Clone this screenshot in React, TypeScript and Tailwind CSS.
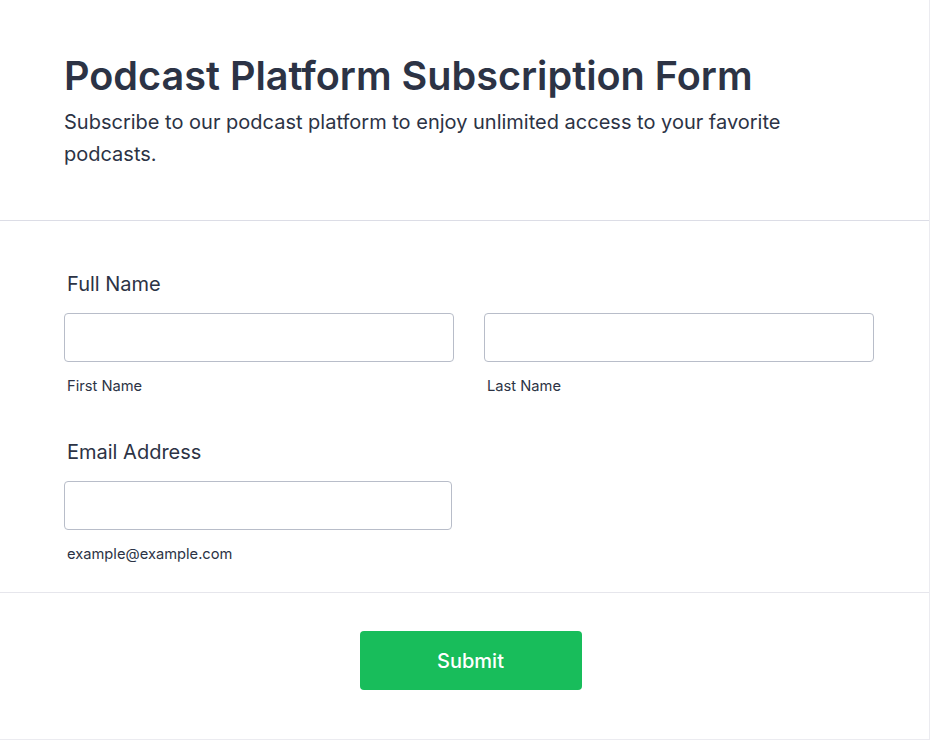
import React from 'react';

const SubLabel = ({ children }: { children: React.ReactNode }) => (
    <p className="mt-[14px] pl-[3px] text-[14.7px] leading-[20px] text-[#2c3345]">{children}</p>
);

const App = () => {
    return (
        <div className="min-h-[740px] w-full bg-white" style={{ fontFamily: 'Inter, "Noto Sans", sans-serif' }}>
            <div className="h-[740px] w-[930px] border-r border-b border-[#ebebf0] bg-white">
                <header className="border-b border-[#dcdde6] px-16 pt-[52px] pb-[50px]">
                    <h1 className="text-[39.6px] leading-[48px] font-semibold text-[#2c3345]">Podcast Platform Subscription Form</h1>
                    <p className="mt-[6px] max-w-[740px] text-[20px] leading-[32px] text-[#2c3345]">
                        Subscribe to our podcast platform to enjoy unlimited access to your favorite podcasts.
                    </p>
                </header>

                <form className="border-b border-[#e6e6ec] pt-[49px] pr-[55px] pb-[28px] pl-16" onSubmit={(e) => e.preventDefault()}>
                    <label className="block pl-[3px] text-[20px] leading-[28px] text-[#2c3345]">Full Name</label>
                    <div className="mt-[15px] grid grid-cols-2 gap-[30px]">
                        <div>
                            <input className="block h-[49px] w-full rounded-[4px] border border-[#b8bdc9] bg-white px-3 outline-none" />
                            <SubLabel>First Name</SubLabel>
                        </div>
                        <div>
                            <input className="block h-[49px] w-full rounded-[4px] border border-[#b8bdc9] bg-white px-3 outline-none" />
                            <SubLabel>Last Name</SubLabel>
                        </div>
                    </div>

                    <label className="mt-[42px] block pl-[3px] text-[20px] leading-[28px] text-[#2c3345]">Email Address</label>
                    <input
                        type="email"
                        className="mt-[15px] block h-[49px] w-[388px] rounded-[4px] border border-[#b8bdc9] bg-white px-3 outline-none"
                    />
                    <SubLabel>example@example.com</SubLabel>
                </form>

                <div className="flex justify-center pt-[38px] pl-3">
                    <button
                        type="submit"
                        className="h-[59px] w-[222px] rounded-[4px] bg-[#18bd5b] text-[20px] font-medium text-white"
                    >
                        Submit
                    </button>
                </div>
            </div>
        </div>
    );
};

export default App;
